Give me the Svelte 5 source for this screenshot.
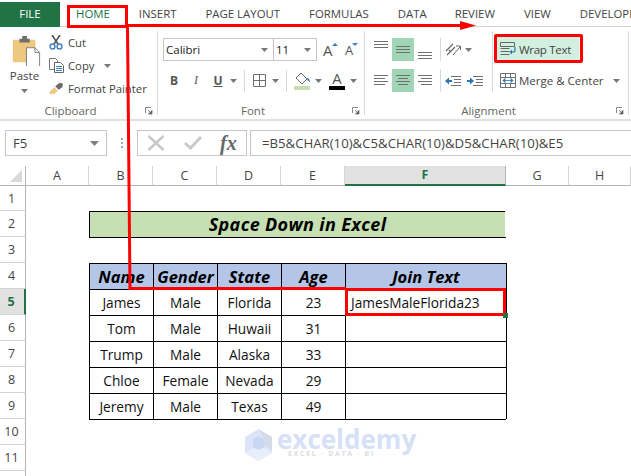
<script>
  const tabs = [
    { t: 'HOME', ml: 16, home: true },
    { t: 'INSERT', ml: 29 },
    { t: 'PAGE LAYOUT', ml: 29 },
    { t: 'FORMULAS', ml: 29 },
    { t: 'DATA', ml: 29 },
    { t: 'REVIEW', ml: 28 },
    { t: 'VIEW', ml: 29 },
    { t: 'DEVELOPER', ml: 29 }
  ];
  const cols = ['A', 'B', 'C', 'D', 'E', 'F', 'G', 'H'];
  const table = {
    4: ['Name', 'Gender', 'State', 'Age', 'Join Text'],
    5: ['James', 'Male', 'Florida', '23', 'JamesMaleFlorida23'],
    6: ['Tom', 'Male', 'Huwaii', '31', ''],
    7: ['Trump', 'Male', 'Alaska', '33', ''],
    8: ['Chloe', 'Female', 'Nevada', '29', ''],
    9: ['Jeremy', 'Male', 'Texas', '49', '']
  };
  const rows = [1, 2, 3, 4, 5, 6, 7, 8, 9, 10, 11, 12];
  function cellClass(r, c) {
    const inCols = c >= 1 && c <= 5;
    const k = [];
    if ((r >= 4 && r <= 10 && inCols) || (r === 3 && inCols)) k.push('bt');
    if (r >= 4 && r <= 9 && c >= 1 && c <= 6) k.push('bl');
    if (r === 4 && inCols) k.push('head');
    if (r === 5 && c === 5) k.push('left');
    return k.join(' ');
  }
</script>

{#snippet arrow()}
  <svg class="caret" width="7" height="4" viewBox="0 0 7 4"><path d="M0 0h7L3.500 4z" fill="#777" /></svg>
{/snippet}

{#snippet lines(ys, xs)}
  <svg width="22" height="23" viewBox="0 0 22 23">
    {#each ys as y, i}
      <path d={`M${xs[i][0]} ${y + 0.5}H${xs[i][1]}`} stroke="#707070" fill="none" />
    {/each}
  </svg>
{/snippet}

{#snippet launcher()}
  <svg class="launch" width="8" height="8" viewBox="0 0 8 8">
    <path d="M0.500 6V0.500H6" stroke="#8a8a8a" fill="none" />
    <path d="M3 3l3.500 3.500M7 3.500V7H3.500z" stroke="#666" fill="#666" stroke-width="0.800" />
  </svg>
{/snippet}

<div class="app">
  <nav class="tabs">
    <div class="file">FILE</div>
    {#each tabs as tab}
      <span class="tab" class:home={tab.home} style={`margin-left:${tab.ml}px`}>{tab.t}</span>
    {/each}
  </nav>

  <section class="ribbon">
    <div class="group clip">
      <div class="body clipbody">
        <div class="paste">
          <svg width="30" height="30" viewBox="0 0 30 32">
            <path d="M1 4h24v24H1z" fill="#EDC87E" />
            <path d="M8 3h3V0h5v3h3v4H8z" fill="#6f6f6f" />
            <path d="M15.500 12.500h9l5 5v15h-14z" fill="#fff" stroke="#7c7c7c" />
            <path d="M24.500 12.500v5h5" fill="none" stroke="#7c7c7c" />
          </svg>
          <span class="pastetext">Paste</span>
          {@render arrow()}
        </div>
        <div class="smalls">
          <div class="small">
            <svg width="15" height="15" viewBox="0 0 15 15">
              <path d="M3 0l6 9M11 0L5 9" stroke="#555" stroke-width="1.600" fill="none" />
              <circle cx="3.500" cy="11.500" r="2.500" fill="none" stroke="#3E7FBF" stroke-width="1.400" />
              <circle cx="10.500" cy="11.500" r="2.500" fill="none" stroke="#3E7FBF" stroke-width="1.400" />
            </svg>
            <span>Cut</span>
          </div>
          <div class="small">
            <svg width="15" height="15" viewBox="0 0 15 15">
              <path d="M0.500 0.500h6l2 2v9h-8z" fill="#fff" stroke="#777" />
              <path d="M5.500 4.500h6l3 3v7h-9z" fill="#fff" stroke="#666" />
              <path d="M7 8.500h6M7 10.500h6M7 12.500h6" stroke="#3E7FBF" />
            </svg>
            <span>Copy</span>
            <span class="copycaret">{@render arrow()}</span>
          </div>
          <div class="small">
            <svg width="15" height="15" viewBox="0 0 17 15">
              <path d="M0 12l6-6 4 4-4 4-2-1-1 2z" fill="#EDC87E" />
              <path d="M7 5l5-4 4 1-1 4-4 3z" fill="#6b6b6b" />
            </svg>
            <span>Format Painter</span>
          </div>
        </div>
      </div>
      <div class="label">Clipboard</div>
      {@render launcher()}
    </div>

    <div class="group font">
      <div class="body">
        <div class="rowa">
          <div class="combo name">Calibri{@render arrow()}</div>
          <div class="combo size">11{@render arrow()}</div>
          <div class="sizer grow"><span>A</span><svg width="6" height="3" viewBox="0 0 6 3"><path d="M0 3l3-3 3 3z" fill="#3E7FBF" /></svg></div>
          <div class="sizer shrink"><span>A</span><svg width="6" height="3" viewBox="0 0 6 3"><path d="M0 0h6l-3 3z" fill="#3E7FBF" /></svg></div>
        </div>
        <div class="rowb">
          <span class="fmt b">B</span>
          <span class="fmt i">I</span>
          <span class="fmt u">U</span>
          <span class="cw c1">{@render arrow()}</span>
          <i class="sep s1"></i>
          <svg class="borders" width="13" height="13" viewBox="0 0 13 13">
            <path d="M0.500 0.500h12v12h-12zM6.500 0.500v12M0.500 6.500h12" fill="none" stroke="#707070" />
          </svg>
          <span class="cw c2">{@render arrow()}</span>
          <i class="sep s2"></i>
          <svg class="fill" width="17" height="18" viewBox="0 0 17 18">
            <path d="M7 1l6 6-5 5-6-6z" fill="#fff" stroke="#666" />
            <path d="M13 6c2 0 3 2 3 4-2-1-3-2-3-4z" fill="#3E7FBF" />
            <path d="M0 14h16v4H0z" fill="#C6E0B4" />
          </svg>
          <span class="cw c3">{@render arrow()}</span>
          <div class="fontcolor">
            <span>A</span>
            <i></i>
          </div>
          <span class="cw c4">{@render arrow()}</span>
        </div>
      </div>
      <div class="label">Font</div>
      {@render launcher()}
    </div>

    <div class="group align">
      <div class="body alignbody">
        <div class="aligngrid">
          <div class="cell">{@render lines([3, 6, 9], [[4, 18], [4, 18], [4, 18]])}</div>
          <div class="cell on">{@render lines([8, 11, 14], [[4, 18], [4, 18], [4, 18]])}</div>
          <div class="cell">{@render lines([14, 17, 20], [[4, 18], [4, 18], [4, 18]])}</div>
          <i class="vsep"></i>
          <div class="orient">
            <svg width="17" height="15" viewBox="0 0 17 15">
              <path d="M1 9L8 2M2 13L10 5M4 8l2 2" fill="none" stroke="#666" stroke-width="1.100" />
              <path d="M8 13L15 5M11 4h4.500v4" fill="none" stroke="#666" />
            </svg>
            {@render arrow()}
          </div>
          <div class="cell">{@render lines([6, 9, 12, 15], [[4, 18], [4, 15], [4, 18], [4, 15]])}</div>
          <div class="cell on">{@render lines([6, 9, 12, 15], [[4, 18], [6, 16], [4, 18], [6, 16]])}</div>
          <div class="cell">{@render lines([6, 9, 12, 15], [[4, 18], [7, 18], [4, 18], [7, 18]])}</div>
          <i class="vsep"></i>
          <div class="indents">
            <svg width="16" height="12" viewBox="0 0 16 12">
              <path d="M6 1.500h10M9 4.500h7M9 7.500h7M6 10.500h10" stroke="#707070" />
              <path d="M0 6l4-3.500V5h3v2H4v2.500z" fill="#2F75B5" />
            </svg>
            <svg width="16" height="12" viewBox="0 0 16 12">
              <path d="M6 1.500h10M9 4.500h7M9 7.500h7M6 10.500h10" stroke="#707070" />
              <path d="M7 6L3 2.500V5H0v2h3v2.500z" fill="#2F75B5" />
            </svg>
          </div>
        </div>
        <div class="wrapcol">
          <div class="wrapbtn">
            <svg width="18" height="15" viewBox="0 0 18 15">
              <path d="M0.500 0.500h14v4h-14zM0.500 6.500h9M0.500 9.500h9M0.500 12.500h9" fill="none" stroke="#666" />
              <path d="M15 5v3c0 1.500-1 2-2 2h-2" fill="none" stroke="#2F75B5" stroke-width="1.200" />
              <path d="M12 7.500L9.500 10l2.500 2.500z" fill="#2F75B5" />
            </svg>
            <span>Wrap Text</span>
          </div>
          <div class="mergebtn">
            <svg width="16" height="15" viewBox="0 0 16 15">
              <path d="M0.500 0.500h15v14h-15zM0.500 4.500h15M0.500 10.500h15M5.500 0.500v4M10.500 0.500v4M5.500 10.500v4M10.500 10.500v4" fill="none" stroke="#707070" />
              <path d="M3 7.500h10M3 7.500l2-2v4zM13 7.500l-2-2v4z" stroke="#2F75B5" fill="#2F75B5" stroke-width="0.800" />
            </svg>
            <span>Merge &amp; Center</span>
            <span class="mergecaret">{@render arrow()}</span>
          </div>
        </div>
      </div>
      <div class="label">Alignment</div>
      {@render launcher()}
    </div>
  </section>

  <section class="formula">
    <div class="namebox">F5<svg width="9" height="5" viewBox="0 0 9 5"><path d="M0 0h9L4.500 5z" fill="#808080" /></svg></div>
    <div class="dots"><i></i><i></i><i></i></div>
    <div class="fxbox">
      <svg width="18" height="16" viewBox="0 0 18 16"><path d="M1.500 1l15 14M16.500 1l-15 14" stroke="#c9c9c9" stroke-width="2.600" /></svg>
      <svg width="18" height="14" viewBox="0 0 18 14"><path d="M1 7l5.500 5L17 1" stroke="#c9c9c9" stroke-width="3" fill="none" /></svg>
      <span class="fx">fx</span>
    </div>
    <div class="input">=B5&amp;CHAR(10)&amp;C5&amp;CHAR(10)&amp;D5&amp;CHAR(10)&amp;E5</div>
  </section>

  <section class="sheet">
    <div class="corner"><svg width="12" height="12" viewBox="0 0 12 12"><path d="M12 0v12H0z" fill="#d9d9d9" /></svg></div>
    {#each cols as c}
      <div class="colh" class:sel={c === 'F'}>{c}</div>
    {/each}
    {#each rows as r}
      <div class="rowh" class:sel={r === 5}>{r}</div>
      {#if r === 2}
        <div class="c"></div>
        <div class="title">Space Down in Excel</div>
        <div class="c"></div>
        <div class="c"></div>
      {:else}
        {#each cols as _, i}
          <div class={`c ${cellClass(r, i)}`}>{table[r] && i >= 1 && i <= 5 ? table[r][i - 1] : ''}</div>
        {/each}
      {/if}
    {/each}
  </section>

  <svg class="annot" width="631" height="476" viewBox="0 0 631 476">
    <path d="M126 25.500H462" stroke="#f00" stroke-width="3" fill="none" />
    <path d="M460 21l16 4.500-16 4.500z" fill="#f00" />
    <path d="M127.500 27L130 288.500H346" stroke="#f00" stroke-width="3" fill="none" />
  </svg>
  <div class="redbox homebox"></div>
  <div class="redbox wrapbox"></div>
  <div class="redbox cellbox"></div>
  <i class="handle"></i>

  <div class="mark">
    <svg width="29" height="32" viewBox="0 0 29 32">
      <path d="M14.500 0L28 8v16l-13.500 8L1 24V8z" fill="#DCE5F8" />
      <path d="M14.500 0L28 8v13l-9-5V8z" fill="#D3DCE6" />
      <path d="M1 24l13.500-8 13.500 8-13.500 8z" fill="#E8EEFA" />
      <path d="M9 10l6-3 5 3v8l-5 3-6-3z" fill="#C9D7F4" />
    </svg>
    <div class="marktext">
      <span class="brand">exceldemy</span>
      <span class="sub">EXCEL · DATA · BI</span>
    </div>
  </div>
</div>

<style>
  :global(body) { margin: 0; background: #fff; }
  .app {
    position: relative;
    width: 631px;
    height: 476px;
    overflow: hidden;
    background: #fff;
    font-family: "Open Sans", "Noto Sans", sans-serif;
    color: #444;
  }
  i { display: block; font-style: normal; }

  .tabs {
    display: flex;
    align-items: center;
    height: 25px;
    padding-top: 1px;
    border-bottom: 1px solid #d4d4d4;
    white-space: nowrap;
    font-size: 11.400px;
    color: #444;
  }
  .file {
    flex: none;
    align-self: flex-start;
    width: 60px;
    height: 25px;
    margin-top: 1px;
    background: #217346;
    color: #fff;
    text-align: center;
    line-height: 24px;
    font-size: 11.500px;
  }
  .tab { flex: none; }
  .home { color: #217346; }

  .ribbon {
    display: flex;
    height: 88px;
    padding-top: 4px;
    border-bottom: 2px solid #e1e1e1;
  }
  .group {
    position: relative;
    flex: none;
    height: 84px;
    box-sizing: border-box;
    border-right: 1px solid #d9d9d9;
  }
  .clip { width: 158px; }
  .font { width: 207px; }
  .align { width: 264px; }
  .label {
    position: absolute;
    left: 0;
    right: 16px;
    bottom: -4px;
    height: 17px;
    line-height: 17px;
    text-align: center;
    font-size: 11.500px;
    color: #666;
  }
  .launch { position: absolute; right: 4px; bottom: 0; }

  .clipbody { display: flex; }
  .paste {
    width: 49px;
    display: flex;
    flex-direction: column;
    align-items: center;
    padding-top: 5px;
  }
  .paste svg:first-child { margin-left: 3px; }
  .pastetext { font-size: 11.500px; line-height: 16px; margin-top: 2px; }
  .paste .caret { margin-top: 5px; }
  .smalls { display: flex; flex-direction: column; }
  .small {
    display: flex;
    align-items: center;
    height: 23px;
    font-size: 11.300px;
    white-space: nowrap;
  }
  .small svg { flex: none; margin-right: 4px; }
  .copycaret { display: flex; margin-left: 10px; }

  .font .body { padding-left: 5px; }
  .rowa { display: flex; align-items: center; margin-top: 7px; height: 23px; }
  .combo {
    display: flex;
    align-items: center;
    justify-content: space-between;
    box-sizing: border-box;
    height: 23px;
    padding: 0 5px 0 2px;
    border: 1px solid #c6c6c6;
    font-size: 11.500px;
    color: #222;
  }
  .name { width: 111px; }
  .size { width: 43px; border-left: 0; }
  .sizer {
    display: flex;
    align-items: flex-start;
    width: 18px;
    height: 20px;
    color: #555;
    line-height: 20px;
  }
  .sizer svg { margin-left: -1px; margin-top: 3px; }
  .grow { margin-left: 6px; font-size: 15px; }
  .shrink { margin-left: 4px; font-size: 13px; }
  .rowb {
    position: relative;
    display: flex;
    align-items: center;
    height: 23px;
    margin-top: 8px;
  }
  .rowb > * { flex: none; }
  .fmt { width: 22px; text-align: center; font-size: 12px; color: #555; font-family: "Liberation Serif", serif; }
  .b { font-weight: 700; font-family: "Open Sans", sans-serif; }
  .i { font-style: italic; }
  .u { text-decoration: underline; font-weight: 700; font-family: "Open Sans", sans-serif; }
  .cw { display: flex; }
  .c1 { margin-left: 1px; }
  .sep { width: 1px; height: 22px; background: #d9d9d9; }
  .s1 { margin-left: 7px; }
  .borders { margin-left: 8px; }
  .c2 { margin-left: 6px; }
  .s2 { margin-left: 7px; }
  .fill { margin-left: 7px; }
  .c3 { margin-left: 4px; }
  .fontcolor {
    width: 16px;
    margin-left: 7px;
    display: flex;
    flex-direction: column;
    align-items: center;
    font-size: 15px;
    line-height: 15px;
    color: #555;
  }
  .fontcolor i { width: 16px; height: 4px; background: #000; }
  .c4 { margin-left: 5px; }

  .alignbody { display: flex; }
  .aligngrid {
    width: 128px;
    height: 61px;
    box-sizing: border-box;
    display: grid;
    grid-template-columns: 22px 22px 22px 13px 1fr;
    grid-auto-rows: 23px;
    row-gap: 8px;
    padding: 7px 0 0 5px;
    border-right: 1px solid #d9d9d9;
  }
  .cell { width: 22px; height: 23px; }
  .cell svg { display: block; }
  .on { background: #A0D6B6; }
  .vsep { width: 1px; height: 23px; margin-left: 4px; background: #d9d9d9; }
  .orient, .indents { display: flex; align-items: center; margin-left: -4px; }
  .orient { gap: 3px; }
  .indents { gap: 6px; }
  .wrapcol { display: flex; flex-direction: column; margin-left: 2px; padding-top: 6px; }
  .wrapbtn {
    display: flex;
    align-items: center;
    width: 84px;
    height: 24px;
    box-sizing: border-box;
    padding-left: 5px;
    background: #D3EFDF;
    font-size: 11.500px;
    letter-spacing: -0.300px;
    white-space: nowrap;
  }
  .wrapbtn svg { margin-right: 1px; flex: none; }
  .mergebtn {
    display: flex;
    align-items: center;
    height: 23px;
    margin-top: 8px;
    padding-left: 5px;
    font-size: 11.500px;
    white-space: nowrap;
  }
  .mergebtn svg { margin-right: 3px; flex: none; }
  .mergecaret { display: flex; margin-left: 9px; }

  .formula {
    display: flex;
    height: 26px;
    margin-top: 9px;
    padding-left: 5px;
    font-size: 13.200px;
    color: #444;
  }
  .namebox {
    display: flex;
    align-items: center;
    justify-content: space-between;
    box-sizing: border-box;
    width: 102px;
    padding: 0 7px 0 7px;
    border: 1px solid #c6c6c6;
  }
  .dots {
    width: 30px;
    display: flex;
    flex-direction: column;
    align-items: center;
    justify-content: center;
    gap: 2px;
  }
  .dots i { width: 2px; height: 2px; background: #aaa; }
  .fxbox {
    display: flex;
    align-items: center;
    box-sizing: border-box;
    width: 110px;
    padding-left: 9px;
    gap: 19px;
    border: 1px solid #c6c6c6;
  }
  .fx {
    font: italic 700 20px "Liberation Serif", serif;
    color: #666;
    margin-left: -1px;
  }
  .input {
    flex: 1;
    margin-left: 3px;
    padding-left: 11px;
    line-height: 24px;
    border-top: 1px solid #c6c6c6;
    border-bottom: 1px solid #c6c6c6;
    border-left: 1px solid #c6c6c6;
    white-space: nowrap;
    overflow: hidden;
  }

  .sheet {
    display: grid;
    grid-template-columns: 26px 63px 64px 64px 64px 64px 161px 63px 62px;
    grid-template-rows: 20px 25px repeat(11, 26px);
    margin-top: 10px;
    font-family: "Open Sans", sans-serif;
  }
  .corner {
    display: flex;
    align-items: flex-end;
    justify-content: flex-end;
    padding: 0 3px 3px 0;
    box-sizing: border-box;
    border-right: 1px solid #b5b5b5;
    border-bottom: 1px solid #b5b5b5;
  }
  .colh {
    box-sizing: border-box;
    border-right: 1px solid #d4d4d4;
    border-bottom: 1px solid #b5b5b5;
    text-align: center;
    line-height: 19px;
    font-size: 12.500px;
    color: #444;
  }
  .colh.sel {
    background: #e1e1e1;
    border-right: 1px solid #b5b5b5;
    border-bottom: 2px solid #217346;
    color: #217346;
    font-weight: 700;
    line-height: 18px;
  }
  .rowh {
    box-sizing: border-box;
    border-right: 1px solid #b5b5b5;
    border-bottom: 1px solid #d4d4d4;
    text-align: center;
    padding-right: 2px;
    line-height: 25px;
    font-size: 12.500px;
    color: #444;
  }
  .rowh.sel {
    background: #e1e1e1;
    border-right: 2px solid #217346;
    color: #217346;
    font-weight: 700;
  }
  .c {
    box-sizing: border-box;
    text-align: center;
    line-height: 25px;
    font-size: 13.700px;
    color: #111;
    white-space: nowrap;
    overflow: hidden;
  }
  .bt { border-top: 1px solid #000; }
  .bl { border-left: 1px solid #000; }
  .head {
    background: #B4C6E7;
    font-weight: 700;
    font-style: italic;
    font-size: 16.500px;
    color: #000;
  }
  .left { text-align: left; padding-left: 5px; }
  .title {
    grid-column: span 5;
    box-sizing: border-box;
    margin-right: 1px;
    background: #C6E0B4;
    border: 1px solid #000;
    border-right: 0;
    border-bottom: 0;
    text-align: center;
    line-height: 25px;
    font-weight: 700;
    font-style: italic;
    font-size: 18px;
    letter-spacing: 0.350px;
    color: #000;
  }

  .annot { position: absolute; left: 0; top: 0; pointer-events: none; }
  .redbox { position: absolute; box-sizing: border-box; border: 3px solid #f00; }
  .homebox { left: 67px; top: 5px; width: 61px; height: 23px; }
  .wrapbox { left: 494px; top: 34px; width: 89px; height: 29px; border-radius: 2px; }
  .cellbox { left: 345px; top: 288px; width: 161px; height: 28px; }
  .handle {
    position: absolute;
    left: 503px;
    top: 313px;
    width: 5px;
    height: 5px;
    background: #217346;
  }
  .mark {
    position: absolute;
    left: 244px;
    top: 429px;
    display: flex;
    gap: 4px;
  }
  .marktext { display: flex; flex-direction: column; }
  .brand {
    font: 700 26px/20px "Open Sans", sans-serif;
    color: #D6E0F6;
  }
  .sub {
    font: 700 7px/8px "Open Sans", sans-serif;
    letter-spacing: 1.700px;
    color: #dcdcdc;
    margin: 1px 0 0 11px;
  }
</style>
